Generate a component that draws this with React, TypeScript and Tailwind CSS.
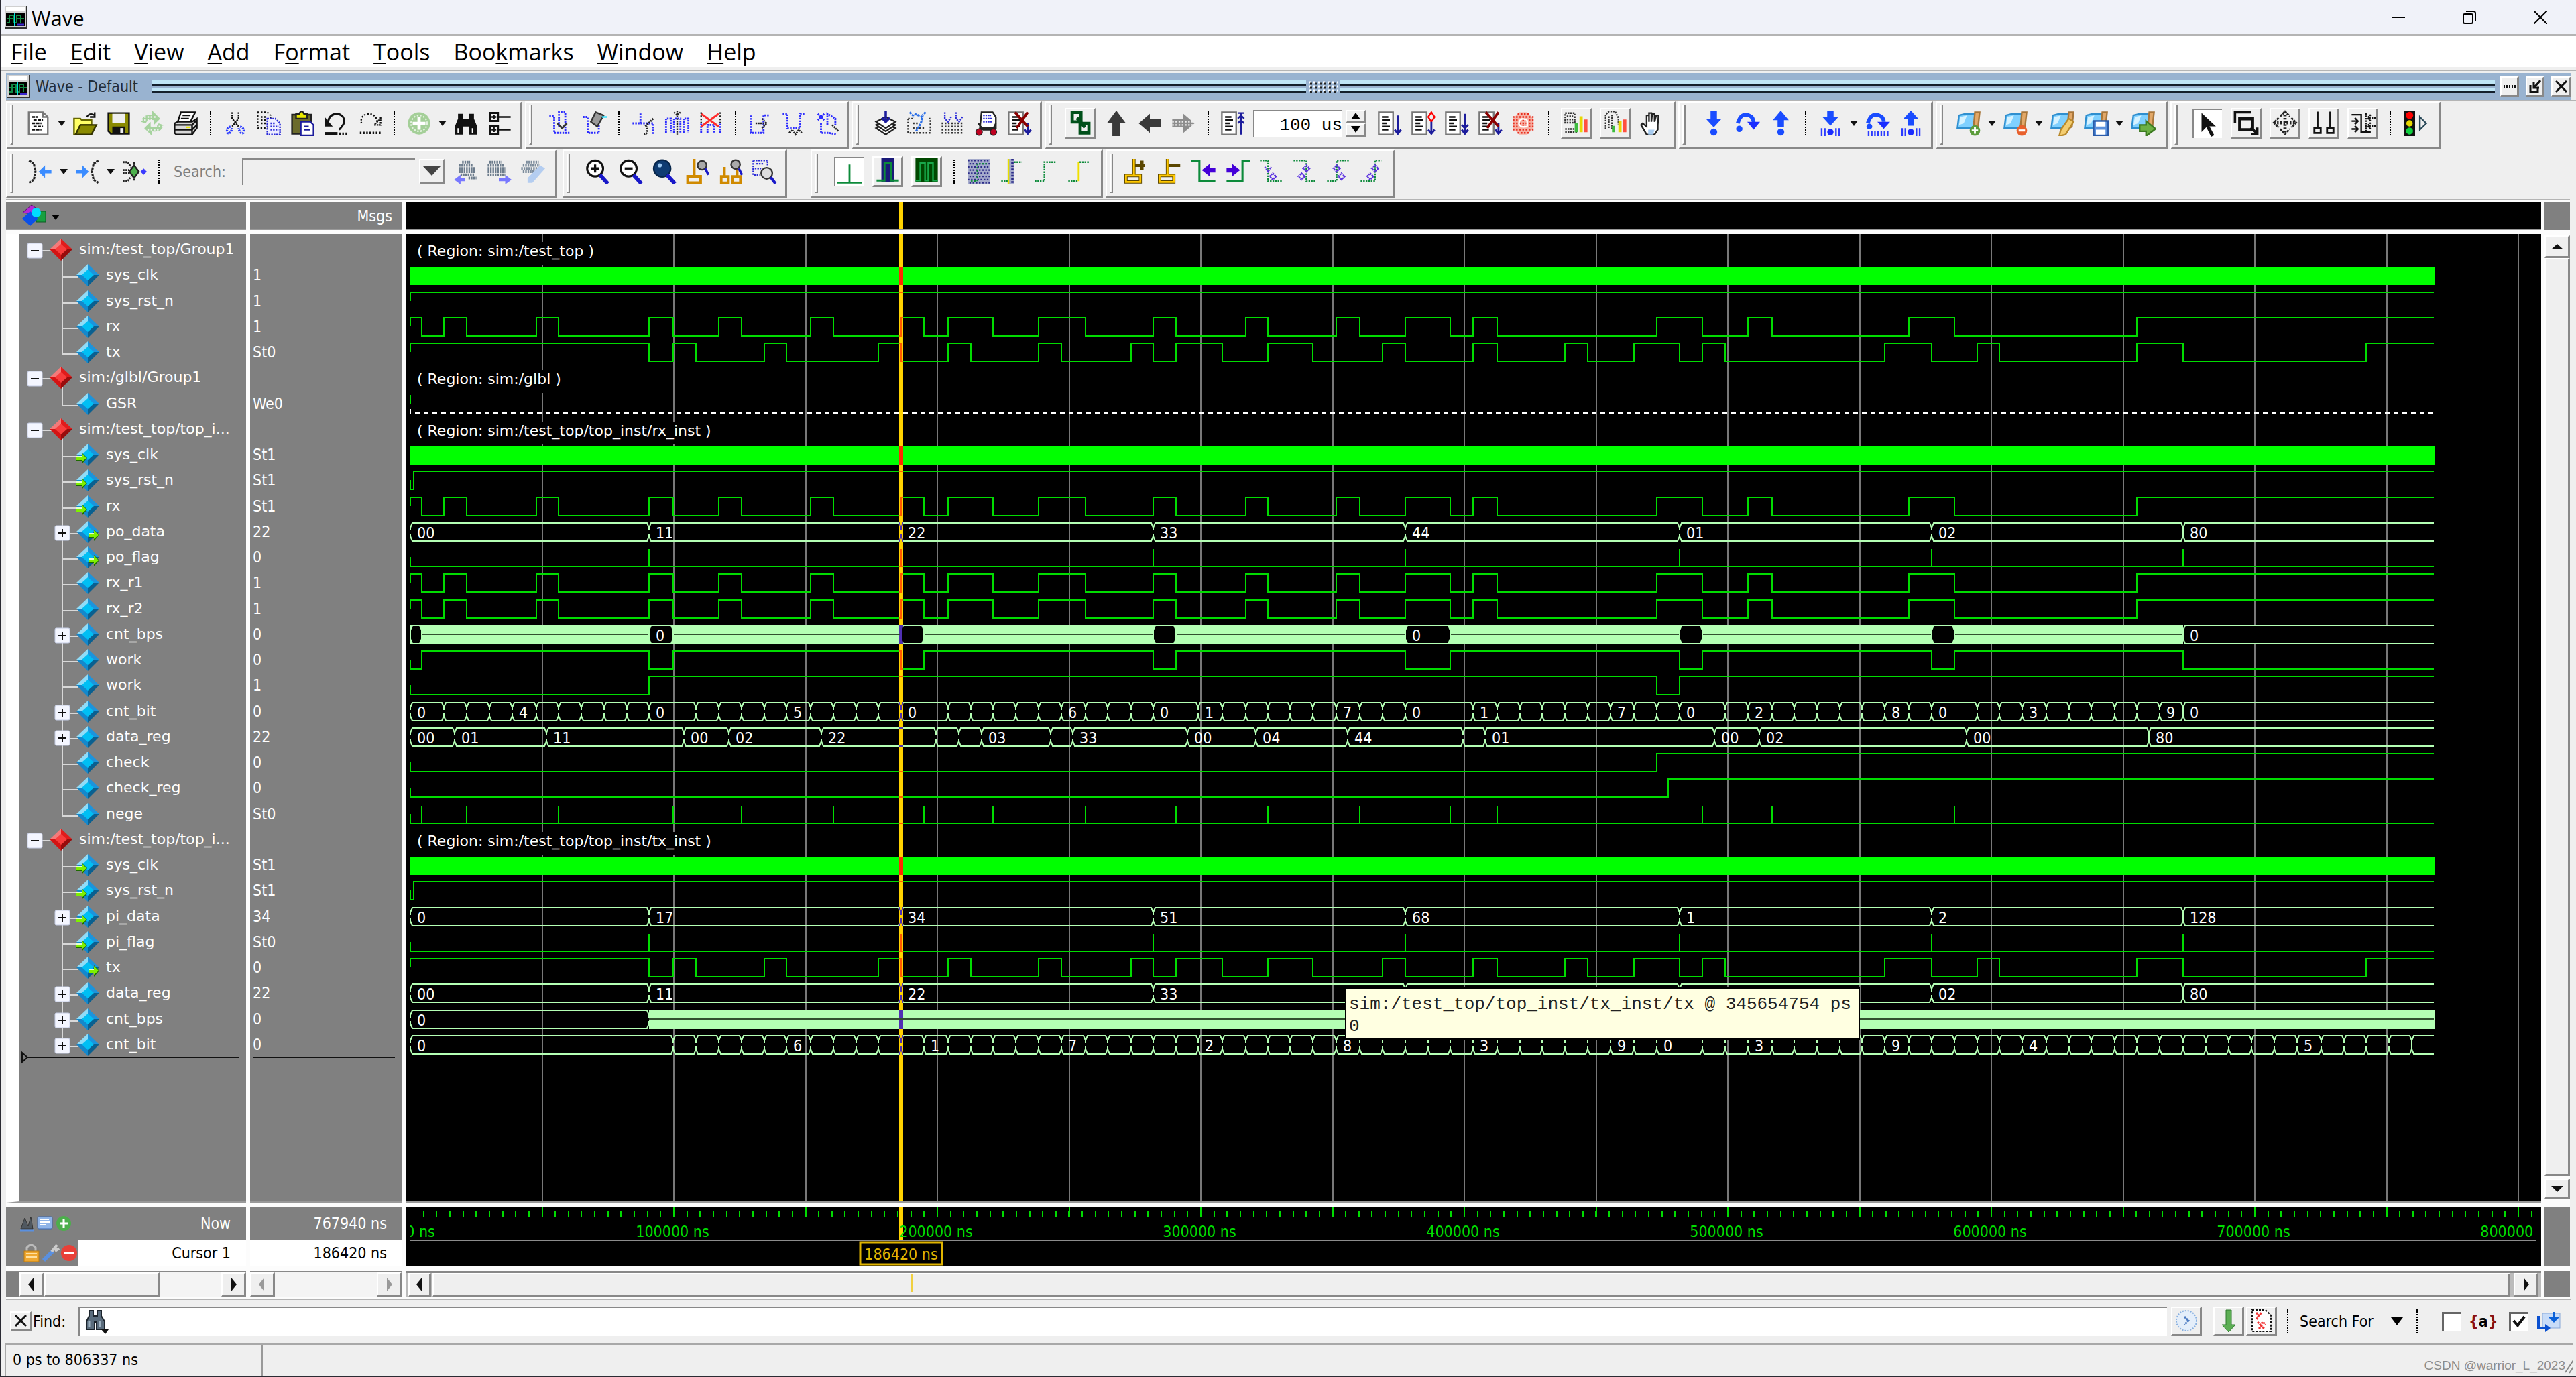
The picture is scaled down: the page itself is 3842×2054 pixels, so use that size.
import React from 'react';

type Kind = 'group' | 'wire' | 'in' | 'out';

interface Signal {
  name: string;
  value: string;
  kind: Kind;
  bus?: boolean;
  last?: boolean;
}

const signals: Signal[] = [
  { name: 'sim:/test_top/Group1', value: '', kind: 'group' },
  { name: 'sys_clk', value: '1', kind: 'wire' },
  { name: 'sys_rst_n', value: '1', kind: 'wire' },
  { name: 'rx', value: '1', kind: 'wire' },
  { name: 'tx', value: 'St0', kind: 'wire', last: true },
  { name: 'sim:/glbl/Group1', value: '', kind: 'group' },
  { name: 'GSR', value: 'We0', kind: 'wire', last: true },
  { name: 'sim:/test_top/top_i...', value: '', kind: 'group' },
  { name: 'sys_clk', value: 'St1', kind: 'in' },
  { name: 'sys_rst_n', value: 'St1', kind: 'in' },
  { name: 'rx', value: 'St1', kind: 'in' },
  { name: 'po_data', value: '22', kind: 'out', bus: true },
  { name: 'po_flag', value: '0', kind: 'out' },
  { name: 'rx_r1', value: '1', kind: 'wire' },
  { name: 'rx_r2', value: '1', kind: 'wire' },
  { name: 'cnt_bps', value: '0', kind: 'wire', bus: true },
  { name: 'work', value: '0', kind: 'wire' },
  { name: 'work', value: '1', kind: 'wire' },
  { name: 'cnt_bit', value: '0', kind: 'wire', bus: true },
  { name: 'data_reg', value: '22', kind: 'wire', bus: true },
  { name: 'check', value: '0', kind: 'wire' },
  { name: 'check_reg', value: '0', kind: 'wire' },
  { name: 'nege', value: 'St0', kind: 'wire', last: true },
  { name: 'sim:/test_top/top_i...', value: '', kind: 'group' },
  { name: 'sys_clk', value: 'St1', kind: 'in' },
  { name: 'sys_rst_n', value: 'St1', kind: 'in' },
  { name: 'pi_data', value: '34', kind: 'in', bus: true },
  { name: 'pi_flag', value: 'St0', kind: 'in' },
  { name: 'tx', value: '0', kind: 'out' },
  { name: 'data_reg', value: '22', kind: 'wire', bus: true },
  { name: 'cnt_bps', value: '0', kind: 'wire', bus: true },
  { name: 'cnt_bit', value: '0', kind: 'wire', bus: true, last: true },
];

/* ---------- toolbar icons, all on a 16 x 16 grid ---------- */

const line = (d: string, stroke = '#111', width = 1, dash?: string) => (
  <path d={d} fill="none" stroke={stroke} strokeWidth={width} strokeDasharray={dash} />
);
const fill = (d: string, color = '#111', stroke?: string) => (
  <path d={d} fill={color} stroke={stroke} strokeWidth={stroke ? 1 : 0} />
);

const docLines = (
  <>
    {fill('M1 1h9v14H1z', '#fff', '#777')}
    {line('M3 4h4M3 6h5M3 8h3M3 10h5M3 12h4', '#111', 1)}
  </>
);
const shapes = (
  <>
    {fill('M2 3l4-1h7l-1 8-3 1H1z', '#7fd0ff', '#2f8fcf')}
    {fill('M12 1l3 0-1 9-3 2z', '#e2a868', '#a8763a')}
    {fill('M3 4l4-1-2 5-3 1z', '#d6f2ff')}
  </>
);

const icons: Record<string, React.ReactNode> = {
  doc: (
    <>
      {fill('M2 1h9l3 3v11H2z', '#fff', '#777')}
      {line('M11 1v3h3', '#777')}
      {line('M4 4h4M5 6h6M4 8h6M5 10h6M4 12h6', '#111', 1, '2 .7')}
    </>
  ),
  open: (
    <>
      {fill('M1 5h4l1 1h6v3H5l-3 6H1z', '#ffff66', '#666600')}
      {fill('M5 9h10l-3 6H2z', '#8a8a00', '#333300')}
      {line('M9 4q2-3 5-1M14 1v3h-3', '#111')}
    </>
  ),
  save: (
    <>
      {fill('M1.500 1.500h13v13H3l-1.500-1.500z', '#8a8a00', '#111')}
      {fill('M4 2h8v6H4z', '#efefef')}
      {fill('M4 10h8v4.500H4z', '#111')}
      {fill('M9 11h2v3H9z', '#efefef')}
    </>
  ),
  refresh: (
    <>
      {fill('M1 7Q2 2 8 3V0l5 5-4 4V6Q5 5 4 8z', '#a6d39e')}
      {fill('M15 9q-1 5-7 4v3l-5-5 4-4v3q4 1 5-2z', '#a6d39e')}
      {line('M1 6h7M3 4h8M5 12h8M8 10h7', '#efefef', 1, '1 1')}
    </>
  ),
  print: (
    <>
      {fill('M5 1h9l-3 6H3z', '#fff', '#111')}
      {line('M6 3h5M5 5h5')}
      {fill('M1 8l2-1h9l3-2v6l-3 4H2l-1-1z', '#d8d8d8', '#111')}
      {line('M1 9h11l3-3M1 12h11l3-3M12 9v6')}
      {fill('M8 10h3v1H8z', '#e8e800')}
    </>
  ),
  cut: (
    <>
      {line('M6 1v4l4 5M10 1v4L6 10', '#111', 1, '1 .6')}
      {line('M5 10q-3 1-2 4 2 1 3-3M11 10q3 1 2 4-2 1-3-3', '#2b3bff', 1.400, '1 .6')}
    </>
  ),
  copy: (
    <>
      {line('M1 1h6l2 2v8H1zM3 4h3M3 6h4M3 8h4', '#111', 1, '1 1')}
      {fill('M7 5h5l3 3v7H7z', '#eef')}
      {line('M7 5h5l3 3v7H7zM9 8h3M9 10h5M9 12h5', '#2b2bd8', 1, '1 .6')}
    </>
  ),
  paste: (
    <>
      {fill('M1.500 2.500h12v12h-12z', '#6b6b2c', '#222')}
      {fill('M4 2h2l1-1.500h1L9 2h2v3H4z', '#e8e800', '#222')}
      {fill('M7 7h6l2 2v6.500H7z', '#fff', '#1c1c9c')}
      {line('M9 10h3M9 12h4', '#1c1c9c')}
    </>
  ),
  undo: (
    <>
      {line('M3 7q1-5 6-5 5 1 4 6-1 2-3 4', '#111', 1.200)}
      {fill('M1 4v6h5z')}
      {line('M1 14.500h8', '#111', 2)}
      {line('M10 14.500h5', '#111', 1.500, '1 1')}
    </>
  ),
  redo: (
    <>
      {line('M13 7Q12 2 7 2 2 3 3 8', '#111', 1, '1 1')}
      {line('M15 4v5h-4l4-4', '#111', 1, '1 .6')}
      {line('M2 14h13', '#111', 1.500, '1 1')}
    </>
  ),
  add: (
    <>
      <circle cx="8" cy="8" r="7" fill="#a4cf98" />
      <circle cx="8" cy="8" r="5" fill="none" stroke="#e3f1df" strokeDasharray="1 1" />
      {fill('M7 4h2v3h3v2H9v3H7V9H4V7h3z', '#fff')}
    </>
  ),
  find: (
    <>
      {fill('M3 2h3v3h4V2h3v3l2 5v5h-5v-5H6v5H1v-5l2-5z')}
      {line('M3 11v3M12 11v3', '#fff', 0.700)}
    </>
  ),
  tree: (
    <>
      {line('M2 1.500h5v5H2zM2 9.500h5v5H2z', '#111', 1.300)}
      {line('M3 4h3M4.500 2.500v3M3 12h3M4.500 10.500v3M7 4h8M7 12h8')}
    </>
  ),
  insPulse: (
    <>
      {line('M1 3.500h3v10.500h10M7 10V1h4v12', '#2b2bff', 1.200, '1 .7')}
      {line('M6 8l3 3 3-3', '#333', 1.200)}
    </>
  ),
  erase: (
    <>
      {line('M1 4h3v10h7V9', '#2b2bff', 1.200, '1 .7')}
      {fill('M9 1l5 2-4 7-4-3z', '#999', '#333')}
      {line('M13 4h3', '#2be0ff')}
    </>
  ),
  cutEdge: (
    <>
      {line('M1 8h5V1M6 8h8v7', '#2b2bff', 1.200, '1 .7')}
      {line('M14 5l-5 5M8 15q3 0 2-5', '#222', 1.200, '1 .5')}
    </>
  ),
  pasteEdge: (
    <>
      {line('M1 14V5h3v9M6 14V5h4v9M12 14V5h3v9', '#2b2bff', 1.200, '1 .6')}
      {line('M8 0v15M6 1l2 2 2-2', '#222', 1, '1 .6')}
    </>
  ),
  delEdge: (
    <>
      {line('M2 14V8M6 14V9h4v5M14 14V8', '#2b2bff', 1.200, '1 .6')}
      {line('M2 2l11 8M13 2L2 10', '#ff2b2b', 1.200)}
      {line('M2 1v7M14 1v7', '#222', 1, '1 1')}
    </>
  ),
  invert: (
    <>
      {line('M2 3v11h8V3h4', '#2b2bff', 1.200, '1 .7')}
      {line('M5 8h7M9 5l3 3-3 3', '#222', 1, '1 .5')}
    </>
  ),
  mirror: (
    <>
      {line('M1 2h3v9h8V2h3', '#2b2bff', 1.200, '1 .7')}
      {line('M5 14l2-2 2 3 2-3 2 2', '#222', 1, '1 .5')}
    </>
  ),
  valueEdge: (
    <>
      {line('M2 2l4 4M6 2L2 6M4 8v6h5l5 1M8 9V2l5 3v4', '#2b2bff', 1.200, '1 .6')}
      {line('M11 9l4 4', '#222', 1, '1 .5')}
    </>
  ),
  layers: (
    <>
      {fill('M2 11l6-3 6 3-6 4z', '#fff', '#222')}
      {fill('M2 9l6-3 6 3-6 4z', '#fff', '#222')}
      {fill('M2 7l6-3 6 3-6 4z', '#fff', '#222')}
      {line('M8 0v7M5.500 4.500L8 7l2.500-2.500', '#1c1c9c', 1.500)}
    </>
  ),
  editGrid: (
    <>
      {line('M1 5h3M1 5v9h14V5h-2M4 8h3M4 11h7', '#333', 1, '1 1')}
      {line('M2 1l3 3M12 1l-2 2M5 2l5 2-1 4-3 5', '#2b6fe8', 1.300, '1.500 .5')}
    </>
  ),
  downGrid: (
    <>
      {line('M1 8h14M1 10h14M1 12h14M1 14h14', '#333', 1, '1 1')}
      {line('M3 1v4l2 2 2-3M10 1v4l2 2 2-3', '#2b2bd8', 1, '1 .6')}
    </>
  ),
  cutDoc: (
    <>
      {fill('M5 1h7l2 3v7H4z', '#fff', '#222')}
      {line('M6 3h5M6 5h6M6 7h6', '#2b2bd8', 1, '1 .5')}
      {line('M3 8l3 4h6l2-4', '#222')}
      <circle cx="3.500" cy="13.500" r="2" fill="#c00020" stroke="#222" strokeWidth=".6" />
      <circle cx="12.500" cy="13.500" r="2" fill="#c00020" stroke="#222" strokeWidth=".6" />
    </>
  ),
  delDoc: (
    <>
      {docLines}
      {line('M13 8v6M11 12l2 2.500 2-2.500', '#1c1c9c', 1.200)}
      {line('M5 1l8 9M13 1L6 11', '#8b0000', 1.600)}
    </>
  ),
  link: (
    <>
      {line('M3 1.500h5.500v6H3z', '#00501a', 2)}
      {line('M8 8.500h5.500v6H8z', '#00501a', 2)}
      {line('M6 5l5 6', '#00501a', 2)}
    </>
  ),
  up: fill('M8 0l6 8h-3.500v8h-5V8H2z', '#3a3a3a'),
  left: fill('M1 8l7-6v3.500h7v5H8V14z', '#3a3a3a'),
  right: (
    <>
      {fill('M15 8L8 2v3.500H1v5h7V14z', '#8d8d8d')}
      {line('M1 7h13M1 9h13', '#eee', 1, '1 1')}
    </>
  ),
  restart: (
    <>
      {docLines}
      {line('M13 2v13M11 1.500h4M11 5l2-2 2 2M11 8l2-2 2 2', '#1c1c9c')}
    </>
  ),
  run: (
    <>
      {docLines}
      {line('M13 3v11M11 12l2 2.500 2-2.500', '#1c1c9c', 1.200)}
    </>
  ),
  cont: (
    <>
      {docLines}
      {line('M13 1l2 3-2 3-2-3z', '#f00')}
      {line('M13 7v7M11 12l2 2.500 2-2.500', '#1c1c9c', 1.200)}
    </>
  ),
  runAll: (
    <>
      {docLines}
      {line('M13 2v12M11 9l2 2 2-2M11 12l2 2.500 2-2.500', '#1c1c9c', 1.200)}
    </>
  ),
  stop: (
    <>
      {fill('M5 1h5l4 4v6l-4 4H5l-4-4V5z', '#f7b0a4')}
      {line('M4 2h8M1 4h14M1 6h14M1 8h14M1 10h14M1 12h14M4 14h8', '#e83020', 1, '1 1')}
      {line('M10 6q-4-2-5 1-1 4 5 3M10 6v4', '#fff')}
    </>
  ),
  profile: (
    <>
      {line('M1 2h6v6H1zM2 4h4M2 6h4M1 12h8M1 14h8', '#333', 1, '1 .6')}
      {fill('M7 8h2v6H7z', '#3dbb3d')}
      {fill('M10 4h2v10h-2z', '#e8d800')}
      {fill('M13 6h2v8h-2z', '#ff5040')}
    </>
  ),
  memory: (
    <>
      {line('M2 12V3l2-2h4l2 4v4M4 4v8M6 3v9', '#333', 1, '1 .6')}
      {fill('M10 7h2v7h-2z', '#e8d800')}
      {fill('M13 6h2v8h-2z', '#ff5040')}
      {fill('M6 10h2v4H6z', '#3dbb3d')}
    </>
  ),
  hand: (
    <>
      {fill('M5 15L1.500 9l1-1L5 10V3h1.500v4V1.500H8V7l.500-5H10v5l1-4h1.500l-.5 6v3l-2 3z', '#fff', '#222')}
      {fill('M6 12h4l-1 3H6z', '#a8ccf0')}
    </>
  ),
  stepIn: (
    <>
      {fill('M6 0h4v5h3l-5 5.500L3 5h3z', '#1a4cff')}
      <circle cx="8" cy="13.500" r="2.200" fill="#1a4cff" />
    </>
  ),
  stepOver: (
    <>
      {line('M2 8Q4 1 9 3q3 1 3 5', '#1a4cff', 2.400)}
      {fill('M8 7h8l-4 5z', '#1a2cff')}
      <circle cx="3" cy="11.500" r="2" fill="#1a4cff" />
    </>
  ),
  stepOut: (
    <>
      {fill('M6 10.500h4V6h3L8 0 3 6h3z', '#1a4cff')}
      <circle cx="8" cy="13.500" r="2.200" fill="#1a4cff" />
    </>
  ),
  stepInCur: (
    <>
      {fill('M6 0h4v4h3L8 9.500 3 4h3z', '#1a4cff')}
      {line('M2.500 11v5M4.500 11v5M11.500 11v5M13.500 11v5', '#2b3bff')}
      <circle cx="8" cy="13.500" r="2" fill="#1a2cff" />
    </>
  ),
  stepOverCur: (
    <>
      {line('M2 8Q4 1 9 3q3 1 3 4', '#1a4cff', 2.400)}
      {fill('M8 7h8l-4 4.500z', '#1a2cff')}
      <circle cx="3" cy="10" r="1.800" fill="#1a4cff" />
      {line('M2 14.500h14', '#2b3bff', 3, '1 1')}
    </>
  ),
  stepOutCur: (
    <>
      {fill('M6 9.500h4V5.500h3L8 0 3 5.500h3z', '#1a4cff')}
      {line('M2.500 11v5M4.500 11v5M11.500 11v5M13.500 11v5', '#2b3bff')}
      <circle cx="8" cy="13.500" r="2" fill="#1a2cff" />
    </>
  ),
  bookAdd: (
    <>
      {shapes}
      <circle cx="12" cy="12.500" r="3.300" fill="#5b9c3a" />
      {line('M12 10.500v4M10 12.500h4', '#fff', 1.200)}
    </>
  ),
  bookDel: (
    <>
      {shapes}
      <circle cx="12" cy="12.500" r="3.300" fill="#e8602c" />
      {line('M10 12.500h4', '#fff', 1.300)}
    </>
  ),
  bookEdit: (
    <>
      {shapes}
      {fill('M12 5l3 2-5 8-4 1 1-4z', '#f4cd70', '#b98a2c')}
    </>
  ),
  bookSave: (
    <>
      {shapes}
      {fill('M6.500 6.500h9v9h-9z', '#5a90dc', '#2a5aa8')}
      {fill('M8 7h6v3H8zM8 12h6v3H8z', '#fff')}
    </>
  ),
  bookGo: (
    <>
      {shapes}
      {fill('M6 9h4V6.500l6 5-6 4.500v-3H6z', '#6cb044', '#3c7a20')}
    </>
  ),
  select: fill('M4 1v12l3-3 3 6 2-1-3-5.500h4z'),
  zoomBox: (
    <>
      {line('M1 8V1.500h10', '#111', 1.500)}
      {line('M4 5.500h8v7H4z', '#111', 2)}
      {line('M11 11l4 4M15 11v4.500h-4', '#111', 1.500)}
    </>
  ),
  pan: (
    <>
      {line('M8 1v14M1 8h14', '#222', 2, '1 1')}
      {line('M5 4l3-3 3 3M5 12l3 3 3-3M4 5L1 8l3 3M12 5l3 3-3 3', '#222', 1.200, '1.500 .5')}
    </>
  ),
  twoCursor: line('M4 1v10M12 1v10M2 11.500h4v3H2zM10 11.500h4v3h-4z', '#111', 1.200),
  editMode: (
    <>
      {line('M1 3h6v11h6M1 7h4M1 12h4M3 5l2 2-2 2M3 10l2 2-2 2', '#111', 1)}
      {line('M10 2v12M12 5h4M12 10h4M13 3l-2 2 2 2M13 8l-2 2 2 2', '#111', 1, '1 .5')}
    </>
  ),
  traffic: (
    <>
      {fill('M1 0h7v16H1z')}
      <circle cx="4.500" cy="3" r="2.300" fill="#f00" />
      <circle cx="4.500" cy="8" r="2" fill="#e8d800" />
      <circle cx="4.500" cy="12.800" r="2.200" fill="#10d040" />
      {line('M11 4l4 4-4 4z', '#2a4a5a')}
    </>
  ),
  prevEdge: (
    <>
      {line('M1 1l3 2 1 5-1 5-3 2', '#222', 1.300, '1.500 .5')}
      {fill('M7 8l4-4v3h4v2h-4v3z', '#3b8cff')}
    </>
  ),
  nextEdge: (
    <>
      {line('M15 1l-3 2-1 5 1 5 3 2', '#222', 1.300, '1.500 .5')}
      {fill('M9 8L5 4v3H1v2h4v3z', '#3b8cff')}
    </>
  ),
  anyEdge: (
    <>
      {line('M1 2h3l2 3M1 14h3l2-3M1 7h4M1 9h4M8 2v3M8 11v3', '#222', 1.200, '1 .6')}
      {fill('M8 4l3 4-3 4-3-4z', '#4cb04c', '#222')}
      {fill('M12 8l2-2 2 2-2 2z', '#3b3bff')}
    </>
  ),
  findBack: (
    <>
      {line('M6 2h5M4 4h9M4 6h10M4 8h10M5 10h9M10 12h5', '#6c7c8c', 1.600, '1 .5')}
      {fill('M1 13l4-3v2h3v2H5v2z', '#7878ff')}
    </>
  ),
  findNext: (
    <>
      {line('M2 2h8M1 4h10M1 6h11M1 8h11M1 10h11', '#6c7c8c', 1.600, '1 .5')}
      {fill('M16 13l-4-3v2H8v2h4v2z', '#7878ff')}
    </>
  ),
  findOpt: (
    <>
      {line('M4 2h8M2 4h11M1 6h13M2 8h10', '#7c8c9c', 1.600, '1 .5')}
      {fill('M13 4l3 2-8 9-3 0V12z', '#b4cdf0')}
    </>
  ),
  zoomIn: (
    <>
      <circle cx="7" cy="6" r="5" fill="#fff" stroke="#111" strokeWidth="1.300" />
      {line('M4.500 6h5M7 3.500v5', '#111', 1.400)}
      {line('M10 10l5 5.500', '#1818c8', 2.400)}
    </>
  ),
  zoomOut: (
    <>
      <circle cx="7" cy="6" r="5" fill="#fff" stroke="#111" strokeWidth="1.300" />
      {line('M4.500 6h5', '#111', 1.400)}
      {line('M10 10l5 5.500', '#1818c8', 2.400)}
    </>
  ),
  zoomFull: (
    <>
      <circle cx="7" cy="6" r="5.300" fill="#0f3c72" stroke="#08264a" />
      <circle cx="5.500" cy="4" r="1.300" fill="#9cc8f0" />
      {line('M10 10l5 5.500', '#1818c8', 2.400)}
    </>
  ),
  zoomCur: (
    <>
      {line('M6 0v11M2 11h8v4H2z', '#d08a00', 1.800)}
      <circle cx="11" cy="4" r="2.800" fill="#aaa" stroke="#333" />
      {line('M13 6l2 4', '#1818c8', 1.500)}
    </>
  ),
  zoomTwo: (
    <>
      {line('M4 5v6M12 5v6M2 11h4.500v4H2zM9 11h5v4H9z', '#d08a00', 1.600)}
      <circle cx="11" cy="3.500" r="2.800" fill="#aaa" stroke="#333" />
      {line('M13 6l2 4', '#1818c8', 1.500)}
    </>
  ),
  zoomRange: (
    <>
      {line('M1 1h9v3M1 1v9h4M3 3h5M2 6h4', '#2b2bd8', 1, '1 .6')}
      <circle cx="9.500" cy="9" r="3.500" fill="#ddd" stroke="#333" />
      {line('M12 11.500l3 4', '#1818c8', 1.800)}
    </>
  ),
  expOff: line('M0 14.500h16M8 3v12', '#0c8a3a', 1.200),
  expDelta: (
    <>
      {fill('M4 0h8v15H4z', '#1a1a78')}
      {line('M1 14h5V3h4v11h5', '#0c8a3a', 1.200)}
    </>
  ),
  expEvent: (
    <>
      {fill('M1 0h14v15H1z', '#004800')}
      {line('M1 14h3V3h3v11h2V3h3v11h3', '#18a84a', 1)}
    </>
  ),
  expAll: (
    <>
      {fill('M1 0h14v16H1z', '#a4aacb')}
      {line('M1 1h14M1 5h14M1 9h14M1 13h14', '#2b2b88', 1, '1 1')}
      {line('M2 3h13M2 7h13M2 11h13M2 15h13', '#2b2b88', 1, '1 1')}
      {line('M3 14h4V3h7', '#0c8a3a', 1, '1 1')}
    </>
  ),
  expOne: (
    <>
      {fill('M5 0h4v16H5z', '#a4aacb')}
      {line('M5.500 0v16', '#e8e000', 1)}
      {line('M8 0v16', '#2b2b88', 1.500, '1 1')}
      {line('M1 14h4M9 2h5', '#0c8a3a', 1, '1 .6')}
    </>
  ),
  colAll: line('M1 14h6V2h7', '#0c8a3a', 1, '1 .6'),
  colOne: (
    <>
      {line('M1 14h6M8 2h6', '#0c8a3a', 1, '1 .6')}
      {line('M7.500 2v12', '#f0e000', 1.200)}
    </>
  ),
  curAdd: (
    <>
      {line('M6 0v10M1 10.500h9v4H1zM6 4h7M11 1v6', '#5a4600', 2)}
      {line('M6 0v10M1 10.500h9v4H1z', '#ffc800', 1.200)}
    </>
  ),
  curDel: (
    <>
      {line('M6 0v10M1 10.500h9v4H1zM6 4h8', '#5a4600', 2)}
      {line('M6 0v10M1 10.500h9v4H1z', '#ffc800', 1.200)}
    </>
  ),
  prevTrans: (
    <>
      {line('M0 1.500h5v12.500h10', '#0c8a3a', 1.300)}
      {fill('M6.500 7l5-4v2.500H15v3h-3.500V11z', '#4400d8')}
    </>
  ),
  nextTrans: (
    <>
      {line('M16 1.500h-5v12.500H1', '#0c8a3a', 1.300)}
      {fill('M9.500 7l-5-4v2.500H1v3h3.500V11z', '#4400d8')}
    </>
  ),
  fallPrev: (
    <>
      {line('M1 1h5v13h9', '#0c8a3a', 1, '1 .6')}
      {line('M4 5l2 3 2-3M9 9l2 2-2 2-2-2z', '#5a30e0', 1, '1 .4')}
    </>
  ),
  fallNext: (
    <>
      {line('M1 1h8v13h6', '#0c8a3a', 1, '1 .6')}
      {line('M9 4l2 2-2 2-2-2zM6 9l2 2-2 2-2-2z', '#5a30e0', 1, '1 .4')}
    </>
  ),
  risePrev: (
    <>
      {line('M1 14h6V1h8', '#0c8a3a', 1, '1 .6')}
      {line('M7 4l2 2-2 2-2-2zM10 9l2 2-2 2-2-2z', '#5a30e0', 1, '1 .4')}
    </>
  ),
  riseNext: (
    <>
      {line('M1 14h9V1h4', '#0c8a3a', 1, '1 .6')}
      {line('M10 4l2 2-2 2-2-2zM7 9l2 2-2 2-2-2z', '#5a30e0', 1, '1 .4')}
    </>
  ),
};

const Icon: React.FC<{ name: string }> = ({ name }) => (
  <svg viewBox="0 0 16 16" className="h-[38px] w-[38px]">
    {icons[name]}
  </svg>
);

/* "name" flat button, "name^" raised, "name!" pressed, "|" separator, "v" menu arrow */
const Tools: React.FC<{ items: string }> = ({ items }) => (
  <>
    {items.split(' ').map((item, i) => {
      if (item === '|') {
        return <div key={i} className="mx-[11px] h-[36px] border-l-2 border-dotted border-black" />;
      }
      if (item === 'v') {
        return (
          <button key={i} aria-label="More" className="flex w-5 justify-center">
            <svg viewBox="0 0 12 8" className="h-[8px] w-[12px]">
              <path d="M0 0h12l-6 8z" fill="#111" />
            </svg>
          </button>
        );
      }
      const name = item.replace(/[\^!]/, '');
      if (item.endsWith('^')) {
        return (
          <button
            key={i}
            aria-label={name}
            className="mx-[6px] flex h-[46px] w-[46px] items-center justify-center border-t-2 border-r-3 border-b-3 border-l-2 border-t-white border-r-[#888] border-b-[#888] border-l-white"
          >
            <Icon name={name} />
          </button>
        );
      }
      if (item.endsWith('!')) {
        return (
          <button
            key={i}
            aria-label={name}
            className="mx-[7px] flex h-[44px] w-[44px] items-center justify-center border-t-2 border-l-2 border-[#888] bg-white"
          >
            <Icon name={name} />
          </button>
        );
      }
      return (
        <button key={i} aria-label={name} className="flex w-[50px] items-center justify-center">
          <Icon name={name} />
        </button>
      );
    })}
  </>
);

const ToolGroup: React.FC<{ className: string; children: React.ReactNode }> = ({ className, children }) => (
  <div
    className={`relative flex h-[72px] shrink-0 items-center border-t-2 border-r-3 border-b-3 border-l-2 border-t-white border-r-[#888] border-b-[#888] border-l-white pb-[6px] ${className}`}
  >
    <div className="absolute top-1 bottom-1 left-[4px] w-[5px] border-r-2 border-b-2 border-l-2 border-r-[#888] border-b-[#888] border-l-white" />
    {children}
  </div>
);

/* ---------- tree of signal names ---------- */

const Box: React.FC<{ x: number; plus?: boolean }> = ({ x, plus }) => (
  <g>
    <rect x={x} y="10" width="22" height="22" rx="2" fill="#f4f6ff" stroke="#c4cce4" />
    <path d={`M${x + 5} 21h12`} stroke="#111" strokeWidth="2" />
    {plus && <path d={`M${x + 11} 15v12`} stroke="#111" strokeWidth="2" />}
  </g>
);

const Gem: React.FC<{ x: number; red?: boolean }> = ({ x, red }) => (
  <g transform={`translate(${x} 19)`}>
    <path d="M-17 0L0-16V0z" fill={red ? '#f47a7a' : '#8fdcf8'} />
    <path d="M17 0L0-16V0z" fill={red ? '#e01c1c' : '#1c94dc'} />
    <path d="M-17 0L0 17V0z" fill={red ? '#d41414' : '#1488cc'} />
    <path d="M17 0L0 17V0z" fill={red ? '#980c0c' : '#0a6090'} />
    <path d="M-9 0L0-8 9 0 0 8z" fill={red ? '#f83c3c' : '#00bff4'} />
  </g>
);

const Arrow: React.FC<{ x: number }> = ({ x }) => (
  <g>
    <path d={`M${x} 21h8v-5l8 8-8 9v-5h-8z`} fill="#1d6a00" />
    <path d={`M${x} 21h8v-4l7 7-7 6v-3h-8z`} fill="#7ff000" />
    <path d={`M${x} 21h8v2h-8z`} fill="#e6ffd0" />
  </g>
);

const NameRow: React.FC<{ signal: Signal }> = ({ signal }) => {
  const { name, kind, bus, last } = signal;
  if (kind === 'group') {
    return (
      <li className="flex items-center">
        <svg className="h-[38px] w-[89px] overflow-visible">
          <path d="M34 21h14M64 30v12" stroke="#d8d8d8" strokeWidth="2" />
          <Box x={12} />
          <Gem x={62} red />
        </svg>
        {name}
      </li>
    );
  }
  return (
    <li className="flex items-center">
      <svg className="h-[38px] w-[129px] overflow-visible">
        <path d={last ? 'M64-2v24h24' : 'M64-2v44M64 22h24'} fill="none" stroke="#d8d8d8" strokeWidth="2" />
        {bus && <Box x={53} plus />}
        <Gem x={102} />
        {kind === 'in' && <Arrow x={85} />}
        {kind === 'out' && <Arrow x={103} />}
      </svg>
      {name}
    </li>
  );
};

/* ---------- waveforms ---------- */

const START = 612;
const END = 3630;
const CURSOR = 1344;

const frame = [968, 1344, 1720, 2096, 2505, 2881, 3256];
const rx = [
  629, 662, 696, 800, 833, 968, 1004, 1072, 1106, 1209, 1243, 1344, 1378, 1414, 1481, 1549, 1619, 1720, 1754, 1858,
  1891, 1993, 2028, 2096, 2163, 2197, 2233, 2471, 2539, 2607, 2643, 2847, 2915, 3187,
];
const tx = [
  968, 1004, 1038, 1140, 1173, 1310, 1344, 1414, 1448, 1549, 1583, 1687, 1720, 1754, 1823, 1891, 1958, 2062, 2096,
  2197, 2233, 2334, 2368, 2437, 2505, 2539, 2573, 2811, 2881, 2949, 2982, 3187, 3256, 3529,
];
const idle = [
  [612, 629],
  [968, 1004],
  [1344, 1378],
  [1720, 1754],
  [2096, 2163],
  [2505, 2539],
  [2881, 2915],
];
const nege = [
  629, 696, 833, 1004, 1106, 1243, 1378, 1481, 1619, 1754, 1891, 2028, 2163, 2233, 2539, 2643, 2915,
];
const rxBits = [
  612, 662, 696, 730, 764, 800, 833, 867, 901, 935, 968, 1038, 1072, 1106, 1140, 1173, 1209, 1243, 1277, 1310, 1344,
  1414, 1448, 1481, 1515, 1549, 1583, 1619, 1652, 1687, 1720, 1787, 1823, 1858, 1891, 1924, 1958, 1993, 2028, 2062,
  2096, 2197, 2233, 2267, 2300, 2334, 2368, 2402, 2437, 2471, 2505, 2573, 2607, 2643, 2676, 2710, 2744, 2777, 2811,
  2847, 2881, 2949, 2982, 3016, 3052, 3086, 3119, 3154, 3187, 3221, 3256,
];
const txBits = [
  612, 1004, 1038, 1072, 1106, 1140, 1173, 1209, 1243, 1277, 1310, 1344, 1378, 1414, 1448, 1481, 1515, 1549, 1583,
  1619, 1652, 1687, 1720, 1754, 1787, 1823, 1858, 1891, 1924, 1958, 1993, 2028, 2062, 2096, 2130, 2163, 2197, 2233,
  2267, 2300, 2334, 2368, 2402, 2437, 2471, 2539, 2573, 2607, 2643, 2676, 2710, 2744, 2777, 2811, 2847, 2881, 2915,
  2949, 2982, 3016, 3052, 3086, 3119, 3154, 3187, 3221, 3256, 3290, 3324, 3358, 3392, 3426, 3462, 3496, 3529, 3563,
  3597,
];
const regEdges = [
  612, 678, 815, 1020, 1087, 1225, 1396, 1430, 1464, 1567, 1600, 1771, 1873, 2010, 2182, 2215, 2557, 2624, 2933, 3205,
];

type Labels = [number, string][];

const byFrame = (values: string[]): Labels => [START, ...frame].map((x, i) => [x, values[i]]);

const labels: Record<number, Labels> = {
  11: byFrame(['00', '11', '22', '33', '44', '01', '02', '80']),
  15: [[968, '0'], [2096, '0'], [3256, '0']],
  18: [
    [612, '0'], [764, '4'], [968, '0'], [1173, '5'], [1344, '0'], [1583, '6'], [1720, '0'], [1787, '1'], [1993, '7'],
    [2096, '0'], [2197, '1'], [2402, '7'], [2505, '0'], [2607, '2'], [2811, '8'], [2881, '0'], [3016, '3'],
    [3221, '9'], [3256, '0'],
  ],
  19: [
    [612, '00'], [678, '01'], [815, '11'], [1020, '00'], [1087, '02'], [1225, '22'], [1464, '03'], [1600, '33'],
    [1771, '00'], [1873, '04'], [2010, '44'], [2215, '01'], [2557, '00'], [2624, '02'], [2933, '00'], [3205, '80'],
  ],
  26: byFrame(['0', '17', '34', '51', '68', '1', '2', '128']),
  29: [[612, '00'], [968, '11'], [1344, '22'], [1720, '33'], [2881, '02'], [3256, '80']],
  30: [[612, '0']],
  31: [
    [612, '0'], [1173, '6'], [1378, '1'], [1583, '7'], [1787, '2'], [1993, '8'], [2197, '3'], [2402, '9'],
    [2471, '0'], [2607, '3'], [2811, '9'], [3016, '4'], [3426, '5'],
  ],
};

const mid = (row: number) => 372 + Math.round(row * 38.25);
const hi = (row: number) => mid(row) - 13;
const lo = (row: number) => mid(row) + 14;

const level = (row: number, high: boolean, edges: number[]) => {
  let up = high;
  let d = `M${START} ${mid(row)}V${up ? hi(row) : lo(row)}`;
  edges.forEach((x) => {
    up = !up;
    d += `H${x}V${up ? hi(row) : lo(row)}`;
  });
  return `${d}H${END}`;
};

const pulses = (row: number, xs: number[]) =>
  `${level(row, false, [])}${xs.map((x) => `M${x} ${hi(row) + 1}V${lo(row)}`).join('')}`;

const cell = (row: number, x1: number, x2: number) => {
  const top = hi(row);
  const bottom = lo(row);
  return `M${x1} ${mid(row) - 2}V${top + 7}L${x1 + 3} ${top}H${x2 - 3}L${x2} ${top + 7}V${mid(row) - 2}M${x2} ${mid(row) + 3}V${bottom - 7}L${x2 - 3} ${bottom}H${x1 + 3}L${x1} ${bottom - 7}V${mid(row) + 3}`;
};

const solidCell = (row: number, x1: number, x2: number) => {
  const top = hi(row);
  const bottom = lo(row);
  return `M${x1} ${top + 7}L${x1 + 3} ${top}H${x2 - 3}L${x2} ${top + 7}V${bottom - 7}L${x2 - 3} ${bottom}H${x1 + 3}L${x1} ${bottom - 7}z`;
};

const openCell = (row: number, x: number) =>
  `M${END} ${hi(row)}H${x + 3}L${x} ${hi(row) + 7}V${lo(row) - 7}L${x + 3} ${lo(row)}H${END}`;

const bus = (row: number, edges: number[]) =>
  edges.map((x, i) => (i + 1 < edges.length ? cell(row, x, edges[i + 1]) : openCell(row, x))).join('');

const wires = [
  level(2, true, []),
  level(3, true, rx),
  level(4, true, tx),
  `M${START} ${hi(6)}v13`,
  level(9, false, [617]),
  level(10, true, rx),
  pulses(12, frame),
  level(13, true, rx),
  level(14, true, rx),
  level(16, false, [...idle.flat().slice(1), 3256]),
  level(17, false, [968, 2471, 2505]),
  level(20, false, [2471]),
  level(21, false, [2488]),
  pulses(22, nege),
  level(25, false, [617]),
  pulses(27, frame),
  level(28, true, tx),
].join('');

const buses = [
  bus(11, [START, ...frame]),
  bus(18, rxBits),
  bus(19, regEdges),
  bus(26, [START, ...frame]),
  bus(29, [START, ...frame]),
  cell(30, START, 968),
  bus(31, txBits),
].join('');

interface TraceProps {
  green: string;
  clock: string;
  pale: string;
  dash: string;
}

const Traces: React.FC<TraceProps> = ({ green, clock, pale, dash }) => (
  <g fill="none" strokeWidth="2">
    {[1, 8, 24].map((row) => (
      <rect key={row} x={START} y={hi(row) + 1} width={END - START + 1} height="27" fill={clock} />
    ))}
    <path d={wires} stroke={green} />
    <path d={`M${START} ${lo(6) - 6}v6H${END}`} stroke={dash} strokeDasharray="7 6" />
    <path d={buses} stroke={pale} />
    <rect x={START} y={hi(15) - 1} width={3256 - START} height="29" fill={pale} />
    <rect x="968" y={hi(30) - 1} width={END - 967} height="29" fill={pale} />
    <path d={`M${START} ${mid(15)}H3256M968 ${mid(30)}H${END}`} stroke="#31502f" />
    {idle.map(([a, b]) => (
      <path key={a} d={solidCell(15, a, b)} fill="#000" stroke={pale} />
    ))}
    <path d={openCell(15, 3256)} fill="#000" stroke={pale} />
  </g>
);

const regions: [number, string, number][] = [
  [0, '( Region: sim:/test_top )', 290],
  [5, '( Region: sim:/glbl )', 240],
  [7, '( Region: sim:/test_top/top_inst/rx_inst )', 470],
  [23, '( Region: sim:/test_top/top_inst/tx_inst )', 470],
];

const majors = Array.from({ length: 16 }, (_, i) => 612 + Math.round((i + 1) * 196.5));

const Waves = () => (
  <svg className="absolute inset-0 h-full w-full">
    <defs>
      <clipPath id="cursor">
        <rect x={CURSOR - 3} y="0" width="6" height="2000" />
      </clipPath>
    </defs>
    <g transform="translate(-606 -349)">
      {majors.map((x) => (
        <path key={x} d={`M${x} 349V2000`} stroke="#787878" strokeWidth="2" />
      ))}
      {regions.map(([row, text, width]) => (
        <g key={row}>
          <rect x={START} y={mid(row) - 11} width={width} height="34" fill="#000" />
          <text x="622" y={mid(row) + 10} fill="#fff" className="font-['DejaVu_Sans',sans-serif] text-[22px]">
            {text}
          </text>
        </g>
      ))}
      <Traces green="#00dc00" clock="#00ff00" pale="#b4ffb4" dash="#ffffff" />
      <rect x={CURSOR - 3} y="349" width="6" height="1600" fill="#ffd200" />
      <g clipPath="url(#cursor)">
        <Traces green="#ff5a00" clock="#ff2a00" pale="#5030b4" dash="#3050ff" />
      </g>
      {Object.entries(labels).map(([row, items]) =>
        items.map(([x, text]) => (
          <text key={`${row}-${x}`} x={x + 10} y={mid(Number(row)) + 10} fill="#fff">
            {text}
          </text>
        )),
      )}
    </g>
  </svg>
);

const Ruler = () => (
  <svg className="absolute inset-0 h-full w-full">
    <defs>
      <clipPath id="ruler">
        <rect x="612" y="1800" width="3170" height="100" />
      </clipPath>
    </defs>
    <g transform="translate(-606 -1800)">
      {Array.from({ length: 161 }, (_, i) => 612 + Math.round((i + 1) * 19.65))
        .filter((x) => x < 3785)
        .map((x) => (
          <path key={x} d={`M${x} 1806v10`} stroke="#00dc00" strokeWidth="2" />
        ))}
      {majors.map((x) => (
        <path key={x} d={`M${x} 1800v16`} stroke="#00dc00" strokeWidth="2" />
      ))}
      <rect x={CURSOR - 3} y="1800" width="6" height="50" fill="#ffd200" />
      <g fill="#00dc00" textAnchor="middle" clipPath="url(#ruler)">
        <text x="627" y="1845">
          0 ns
        </text>
        {majors
          .filter((_, i) => i % 2 === 1)
          .map((x, i) => (
            <text key={x} x={x - 2} y="1845">
              {`${i + 1}00000 ns`}
            </text>
          ))}
      </g>
      <path d="M612 1850H3782" stroke="#8c8c8c" strokeWidth="2" />
      <rect x={CURSOR - 61} y="1853" width="122" height="33" fill="#000" stroke="#e0b400" strokeWidth="3" />
      <text x={CURSOR} y="1879" textAnchor="middle" fill="#e0b400">
        186420 ns
      </text>
    </g>
  </svg>
);

/* ---------- chrome ---------- */

const WaveLogo = () => (
  <svg viewBox="0 0 34 34" className="h-[34px] w-[34px] shrink-0">
    <rect width="34" height="34" fill="#333" />
    <rect width="32" height="32" fill="#d0d0d0" />
    <rect x="2" y="2" width="28" height="6" fill="#fff" />
    <rect x="2" y="11" width="28" height="19" fill="#000" />
    <path d="M3 25h4V14h6v11h5V14h6v11" fill="none" stroke="#118a44" strokeWidth="2" />
    <path d="M3 19h10M19 19h10" stroke="#118a44" strokeWidth="2" />
    <path d="M15 11v19" stroke="#00e0e0" strokeWidth="2" />
    <path d="M19 28h10" stroke="#3c28d0" strokeWidth="3" />
  </svg>
);

const menus: [string, string, string][] = [
  ['', 'F', 'ile'],
  ['', 'E', 'dit'],
  ['', 'V', 'iew'],
  ['', 'A', 'dd'],
  ['F', 'o', 'rmat'],
  ['', 'T', 'ools'],
  ['Boo', 'k', 'marks'],
  ['', 'W', 'indow'],
  ['', 'H', 'elp'],
];

const raised = 'border-t-2 border-r-3 border-b-3 border-l-2 border-t-white border-r-[#888] border-b-[#888] border-l-white bg-[#efefef]';

const ScrollButton: React.FC<{ dir: 'left' | 'right' | 'up' | 'down'; off?: boolean; className: string }> = ({
  dir,
  off,
  className,
}) => {
  const paths = {
    left: 'M12 0v20L4 10z',
    right: 'M6 0v20l8-10z',
    up: 'M0 14h18L9 6z',
    down: 'M0 6h18l-9 9z',
  };
  return (
    <button aria-label={`Scroll ${dir}`} className={`flex shrink-0 items-center justify-center ${raised} ${className}`}>
      <svg viewBox="0 0 18 20" className="h-[20px] w-[18px]">
        <path d={paths[dir]} fill={off ? '#999' : '#111'} />
      </svg>
    </button>
  );
};

const TitleLines = () => (
  <div className="flex flex-1 flex-col gap-[3px]">
    <div className="h-[8px] border-t-5 border-b-3 border-t-[#bfe6f6] border-b-[#14202c]" />
    <div className="h-[8px] border-t-5 border-b-3 border-t-[#bfe6f6] border-b-[#14202c]" />
  </div>
);

const App: React.FC = () => {
  return (
    <div className="flex min-h-screen flex-col overflow-hidden border-b-2 border-l-2 border-[#2b2b33] bg-[#efefef] font-['DejaVu_Sans_Condensed','DejaVu_Sans',sans-serif] text-[23px] leading-[28px] text-black">
      {/* Window title */}
      <header className="flex h-[53px] items-center border-b-2 border-[#b4b4b4] bg-[#f0f2f9] pl-[5px]">
        <WaveLogo />
        <h1 className="ml-[6px] flex-1 pt-[3px] font-['Open_Sans','Noto_Sans',sans-serif] text-[31px]">Wave</h1>
        <button aria-label="Minimize" className="flex w-[106px] justify-center">
          <svg viewBox="0 0 20 20" className="h-[20px] w-[20px]">
            <path d="M0 10h20" stroke="#000" strokeWidth="2" />
          </svg>
        </button>
        <button aria-label="Restore" className="flex w-[106px] justify-center">
          <svg viewBox="0 0 20 20" className="h-[20px] w-[20px]" fill="none" stroke="#000" strokeWidth="2">
            <rect x="1" y="5" width="14" height="14" rx="2" />
            <path d="M5 1h11q3 0 3 3v11" />
          </svg>
        </button>
        <button aria-label="Close" className="flex w-[106px] justify-center">
          <svg viewBox="0 0 20 20" className="h-[20px] w-[20px]">
            <path d="M0 0l20 20M20 0L0 20" stroke="#000" strokeWidth="2" />
          </svg>
        </button>
      </header>

      <nav className="flex h-[47px] items-center gap-[35px] bg-white pl-[14px] font-['Open_Sans','Noto_Sans',sans-serif] text-[34px] leading-[44px]">
        {menus.map(([before, key, after]) => (
          <button key={key + after}>
            {before}
            <span className="underline decoration-2 underline-offset-4">{key}</span>
            {after}
          </button>
        ))}
      </nav>

      {/* Dock title */}
      <div className="mt-[4px] border-t-2 border-[#b4b4b4]" />
      <div className="mx-[7px] mt-[3px] flex h-[40px] items-center bg-[#99b3d0] pl-[2px]">
        <WaveLogo />
        <span className="mr-[20px] ml-[8px] text-[#222c38]">Wave - Default</span>
        <TitleLines />
        <svg className="h-[20px] w-[50px]">
          <path d="M4 4h44M4 10h44M4 16h44" stroke="#fff" strokeWidth="3" strokeDasharray="3 4" />
          <path d="M6 6h42M6 12h42M6 18h42" stroke="#222" strokeWidth="3" strokeDasharray="3 4" />
        </svg>
        <TitleLines />
        <div className="ml-2 flex gap-[10px]">
          <button aria-label="Dock menu" className={`flex h-[30px] w-[28px] items-center justify-center ${raised}`}>
            <svg className="h-[6px] w-[18px]">
              <path d="M0 3h18" stroke="#111" strokeWidth="4" strokeDasharray="2 2" />
            </svg>
          </button>
          <button aria-label="Undock" className={`flex h-[30px] w-[28px] items-center justify-center ${raised}`}>
            <svg viewBox="0 0 18 20" className="h-[20px] w-[18px]" fill="none" stroke="#111" strokeWidth="3">
              <path d="M2 8v10h11v-5M17 1l-9 10M7 4v8h8" />
            </svg>
          </button>
          <button aria-label="Close pane" className={`flex h-[30px] w-[30px] items-center justify-center ${raised}`}>
            <svg viewBox="0 0 18 18" className="h-[18px] w-[18px]">
              <path d="M1 1l16 16M17 1L1 17" stroke="#111" strokeWidth="3" />
            </svg>
          </button>
        </div>
      </div>

      {/* Toolbars */}
      <div className="ml-[7px] flex gap-[4px] border-t-2 border-[#b4b4b4]">
        <ToolGroup className="w-[770px] pl-[21px]">
          <Tools items="doc v open save refresh print | cut copy paste undo redo | add v find tree" />
        </ToolGroup>
        <ToolGroup className="w-[483px] pl-[26px]">
          <Tools items="insPulse erase | cutEdge pasteEdge delEdge | invert mirror valueEdge" />
        </ToolGroup>
        <ToolGroup className="w-[284px] pl-[24px]">
          <Tools items="layers editGrid downGrid cutDoc delDoc" />
        </ToolGroup>
        <ToolGroup className="w-[941px] pl-[22px]">
          <Tools items="link^ up left right | restart" />
          <input
            aria-label="Run length"
            defaultValue="100 us"
            className="mx-[5px] h-[40px] w-[133px] border-t-2 border-l-2 border-[#888] bg-white pt-1 text-right font-['Liberation_Mono',monospace] text-[26px]"
          />
          <div className="mr-[11px] flex w-[30px] flex-col">
            <button aria-label="Increase" className={`flex h-[20px] items-center justify-center ${raised}`}>
              <svg viewBox="0 0 14 10" className="h-[10px] w-[14px]">
                <path d="M0 10h14L7 0z" />
              </svg>
            </button>
            <button aria-label="Decrease" className={`flex h-[20px] items-center justify-center ${raised}`}>
              <svg viewBox="0 0 14 10" className="h-[10px] w-[14px]">
                <path d="M0 0h14L7 10z" />
              </svg>
            </button>
          </div>
          <Tools items="run cont runAll delDoc stop | profile^ memory^ hand" />
        </ToolGroup>
        <ToolGroup className="w-[380px] pl-[26px]">
          <Tools items="stepIn stepOver stepOut | stepInCur v stepOverCur stepOutCur" />
        </ToolGroup>
        <ToolGroup className="w-[346px] pl-[22px]">
          <Tools items="bookAdd v bookDel v bookEdit bookSave v bookGo" />
        </ToolGroup>
        <ToolGroup className="w-[404px] pl-[24px]">
          <Tools items="select! zoomBox^ pan^ twoCursor^ editMode^ | traffic" />
        </ToolGroup>
      </div>
      <div className="ml-[7px] flex">
        <ToolGroup className="w-[822px] pl-[24px]">
          <Tools items="prevEdge v nextEdge v anyEdge |" />
          <label htmlFor="search" className="ml-[10px] text-[#808080]">
            Search:
          </label>
          <input
            id="search"
            className="ml-auto h-[40px] w-[258px] border-t-3 border-l-2 border-[#888] bg-[#efefef] px-2"
          />
          <button aria-label="Search history" className={`mr-[6px] ml-[6px] flex h-[38px] w-[38px] items-center justify-center ${raised}`}>
            <svg viewBox="0 0 26 14" className="h-[14px] w-[26px]">
              <path d="M0 0h26L13 14z" fill="#444" />
            </svg>
          </button>
          <Tools items="findBack findNext findOpt" />
          <div className="w-[9px]" />
        </ToolGroup>
        <ToolGroup className="ml-[8px] w-[335px] pl-[24px]">
          <Tools items="zoomIn zoomOut zoomFull zoomCur zoomTwo zoomRange" />
        </ToolGroup>
        <ToolGroup className="ml-[35px] w-[436px] pl-[26px]">
          <Tools items="expOff! expDelta^ expEvent^ | expAll expOne colAll colOne" />
        </ToolGroup>
        <ToolGroup className="ml-[4px] w-[432px] pl-[20px]">
          <Tools items="curAdd curDel prevTrans nextTrans fallPrev fallNext risePrev riseNext" />
        </ToolGroup>
      </div>

      {/* Wave window */}
      <main className="mt-[2px] mr-[9px] ml-[7px] flex flex-1 border-t-2 border-[#b4b4b4] bg-[#fcfcfc] pt-[2px]">
        <section className="flex w-[358px] shrink-0 flex-col text-white">
          <div className="flex h-[42px] items-center border-b-2 border-[#999] bg-[#808080] pl-[24px]">
            <button aria-label="Object filter" className="flex items-center gap-2">
              <svg viewBox="0 0 36 32" className="h-[32px] w-[36px]">
                <path d="M1 12L14 1l9 6-10 7z" fill="#b428d8" stroke="#5a0a70" />
                <path d="M21 10h14v16H21z" fill="#18a040" stroke="#0a5a20" />
                <path d="M0 21l12-11 12 11-12 11z" fill="#0a50e8" />
                <circle cx="21" cy="12" r="7" fill="#00dcff" />
              </svg>
              <svg viewBox="0 0 12 8" className="mt-[6px] h-[8px] w-[12px]">
                <path d="M0 0h12l-6 8z" />
              </svg>
            </button>
          </div>
          <div className="mt-[6px] flex flex-1 flex-col border-b-2 border-l-20 border-b-[#999] border-l-white bg-[#808080] pt-[4px]">
            <ul className="grid h-[1224px] auto-rows-fr font-['DejaVu_Sans',sans-serif] text-[22px]">
              {signals.map((signal, i) => (
                <NameRow key={i} signal={signal} />
              ))}
            </ul>
            <svg className="h-[16px] w-[330px] overflow-visible">
              <path d="M4-7v14l8-7zM12 0h316" fill="none" stroke="#111" strokeWidth="2" />
            </svg>
          </div>
          <div className="mt-[6px] flex h-[49px] shrink-0 items-center bg-[#808080] pr-[23px] pl-[20px]">
            <svg viewBox="0 0 80 24" className="h-[24px] w-[80px]">
              <path d="M2 20L8 4l5 12 4-14 3 18z" fill="#505860" stroke="#333" />
              <path d="M1 22h20" stroke="#5a90e0" strokeWidth="3" />
              <rect x="27" y="2" width="22" height="18" rx="2" fill="#8fb4e8" stroke="#3c68b0" />
              <path d="M30 6h14M30 10h16M30 14h10" stroke="#fff" strokeWidth="2" />
              <circle cx="66" cy="12" r="11" fill="#4cae4c" />
              <path d="M66 6v12M60 12h12" stroke="#fff" strokeWidth="3" />
            </svg>
            <span className="ml-auto">Now</span>
          </div>
          <div className="flex h-[39px] shrink-0 items-stretch bg-[#808080] pl-[26px]">
            <svg viewBox="0 0 82 32" className="my-auto h-[32px] w-[82px] shrink-0">
              <path d="M5 14V8q6-8 13 0v6" fill="none" stroke="#bbb" strokeWidth="3" />
              <rect x="1" y="13" width="22" height="16" fill="#f0a830" stroke="#b87810" />
              <path d="M4 17h16M4 22h16" stroke="#ffe0a0" strokeWidth="2" />
              <path d="M30 27l14-14" stroke="#5a90e0" strokeWidth="6" />
              <path d="M42 14l8-10M47 13l6-4" stroke="#ccc" strokeWidth="4" />
              <circle cx="68" cy="16" r="12" fill="#e84038" />
              <path d="M61 16h14" stroke="#fff" strokeWidth="4" />
            </svg>
            <span className="flex flex-1 items-center justify-end bg-white pr-[23px] text-black">Cursor 1</span>
          </div>
          <div className="mt-[8px] mb-[3px] flex h-[38px] shrink-0 border-t-2 border-[#888] bg-[#808080] pl-[20px]">
            <ScrollButton dir="left" className="w-[37px]" />
            <div className={`w-[172px] ${raised}`} />
            <div className="flex-1 bg-[#f4f4f4]" />
            <ScrollButton dir="right" className="w-[37px]" />
          </div>
        </section>

        <section className="ml-[6px] flex w-[226px] shrink-0 flex-col text-white">
          <div className="flex h-[42px] items-center justify-end border-b-2 border-[#999] bg-[#808080] pt-[2px] pr-[14px]">Msgs</div>
          <div className="mt-[6px] flex flex-1 flex-col border-b-2 border-[#999] bg-[#808080] pt-[4px] pl-[4px]">
            <ul className="grid h-[1224px] auto-rows-fr">
              {signals.map((signal, i) => (
                <li key={i} className="flex items-center">
                  {signal.value}
                </li>
              ))}
            </ul>
            <svg className="h-[16px] w-[212px] overflow-visible">
              <path d="M0 0h212" stroke="#111" strokeWidth="2" />
            </svg>
          </div>
          <div className="mt-[6px] flex h-[49px] shrink-0 items-center justify-end bg-[#808080] pr-[22px]">767940 ns</div>
          <div className="flex h-[39px] shrink-0 items-center justify-end bg-white pr-[22px] text-black">186420 ns</div>
          <div className="mt-[8px] mb-[3px] flex h-[38px] shrink-0 border-t-2 border-[#888]">
            <ScrollButton dir="left" off className="w-[37px]" />
            <div className="flex-1 bg-[#f4f4f4]" />
            <ScrollButton dir="right" off className="w-[37px]" />
          </div>
        </section>

        <section className="ml-[7px] flex min-w-0 flex-1 flex-col">
          <div className="h-[42px] border-b-2 border-[#999] bg-black">
            <svg className="h-full w-full">
              <rect x="735" width="6" height="60" fill="#ffd200" />
            </svg>
          </div>
          <div className="relative mt-[6px] flex-1 overflow-hidden border-b-2 border-[#999] bg-black">
            <Waves />
            <div
              role="tooltip"
              className="absolute top-[1124px] left-[1400px] h-[78px] w-[768px] border-2 border-black bg-[#ffffe1] pt-[7px] pl-[4px] font-['Liberation_Mono',monospace] text-[26px] leading-[33px] whitespace-nowrap text-[#222]"
            >
              sim:/test_top/top_inst/tx_inst/tx @ 345654754 ps
              <br />0
            </div>
          </div>
          <div className="relative mt-[6px] h-[88px] shrink-0 overflow-hidden bg-black">
            <Ruler />
          </div>
          <div className="mt-[8px] mb-[3px] flex h-[38px] shrink-0 border-t-3 border-[#888] bg-[#bbb] pr-[5px] pl-[3px]">
            <ScrollButton dir="left" className="w-[34px]" />
            <div className={`relative ml-[2px] flex-1 ${raised}`}>
              <div className="absolute top-0 bottom-1 left-[712px] w-[2px] bg-[#f0d040]" />
            </div>
            <ScrollButton dir="right" className="ml-[5px] w-[36px]" />
          </div>
        </section>

        <section className="ml-[5px] flex w-[38px] shrink-0 flex-col">
          <div className="h-[42px] bg-[#808080]" />
          <div className="mt-[6px] flex flex-1 flex-col pt-[2px]">
            <ScrollButton dir="up" className="h-[34px]" />
            <div className={`flex-1 ${raised}`} />
            <ScrollButton dir="down" className="mt-[4px] mb-[6px] h-[30px]" />
          </div>
          <div className="mt-[6px] h-[88px] bg-[#808080]" />
          <div className="mt-[8px] mb-[3px] h-[38px] bg-[#808080]" />
        </section>
      </main>

      {/* Find bar */}
      <form className="mx-[7px] flex h-[67px] items-center border-t-2 border-[#b4b4b4] pb-[2px] pl-[6px]">
        <button type="button" aria-label="Close find" className={`flex h-[30px] w-[32px] items-center justify-center ${raised}`}>
          <svg viewBox="0 0 18 18" className="h-[18px] w-[18px]">
            <path d="M1 1l16 16M17 1L1 17" stroke="#111" strokeWidth="3" />
          </svg>
        </button>
        <label htmlFor="find" className="ml-[2px] w-[68px]">
          Find:
        </label>
        <div className="flex h-[44px] flex-1 items-center border-t-2 border-l-2 border-[#888] bg-white pl-2">
          <svg viewBox="0 0 38 38" className="h-[38px] w-[38px]">
            <path d="M6 2h6v8h6V2h6v8l5 8v12H17V19h-3v11H2V18l4-8z" fill="#5a6c7c" stroke="#1c242c" strokeWidth="2" />
            <path d="M6 18v9M22 18v9" stroke="#9cb0c0" strokeWidth="3" />
            <path d="M24 30h11l-5 7z" fill="#111" />
          </svg>
          <input id="find" className="h-full flex-1 px-2 outline-none" />
        </div>
        <button type="button" aria-label="Find" className={`ml-[6px] flex h-[44px] w-[46px] items-center justify-center ${raised}`}>
          <svg viewBox="0 0 36 36" className="h-[36px] w-[36px]" fill="none">
            <circle cx="18" cy="18" r="15" fill="#e4eefa" stroke="#88b0e0" strokeWidth="2" strokeDasharray="2 2" />
            <path d="M15 12l6 6-6 6" stroke="#4878c0" strokeWidth="3" strokeDasharray="3 1" />
          </svg>
        </button>
        <button type="button" aria-label="Find direction" className={`ml-[17px] flex h-[44px] w-[46px] items-center justify-center ${raised}`}>
          <svg viewBox="0 0 36 36" className="h-[36px] w-[36px]">
            <path d="M14 2h8v22h6L18 35 8 24h6z" fill="#5cae54" stroke="#2c7a2c" />
          </svg>
        </button>
        <button type="button" aria-label="Find options" className={`ml-[3px] flex h-[44px] w-[46px] items-center justify-center ${raised}`}>
          <svg viewBox="0 0 36 36" className="h-[36px] w-[36px]" fill="none">
            <path d="M4 2h20l8 8v24H4z" fill="#fff" stroke="#111" strokeWidth="2" strokeDasharray="3 2" />
            <path d="M10 6l4 4 4-4M14 10l-4 7M12 20l4 4 4-4 4 4M14 30l4-4 4 4" stroke="#f03030" strokeWidth="3" strokeDasharray="3 1" />
          </svg>
        </button>
        <div className="ml-[15px] h-[36px] border-l-2 border-dotted border-black" />
        <button type="button" className="ml-[17px] flex w-[154px] items-center justify-between">
          Search For
          <svg viewBox="0 0 18 12" className="h-[12px] w-[18px]">
            <path d="M0 0h18L9 12z" />
          </svg>
        </button>
        <div className="ml-[20px] h-[36px] border-l-2 border-dotted border-black" />
        <input
          type="checkbox"
          id="regex"
          className="ml-[36px] h-[28px] w-[28px] appearance-none border-t-3 border-l-3 border-[#666] bg-white"
        />
        <label htmlFor="regex" className="ml-[12px] w-[38px] font-bold text-[#8b1010]">
          {'{'}
          <span className="text-black">a</span>
          {'}'}
        </label>
        <span className="relative ml-[22px] flex">
          <input
            type="checkbox"
            id="wrap"
            defaultChecked
            className="h-[28px] w-[28px] appearance-none border-t-3 border-l-3 border-[#666] bg-white"
          />
          <svg viewBox="0 0 28 28" className="pointer-events-none absolute inset-0 h-[28px] w-[28px]">
            <path d="M7 13l6 7 10-13" fill="none" stroke="#111" strokeWidth="4" />
          </svg>
        </span>
        <label htmlFor="wrap" aria-label="Wrap search" className="mr-[15px] ml-[14px]">
          <svg viewBox="0 0 36 32" className="h-[32px] w-[36px]" fill="none">
            <rect x="8" y="4" width="26" height="22" fill="#c8dcf8" stroke="#88a8d8" />
            <path d="M2 8v18h12" stroke="#0a50d0" strokeWidth="4" />
            <path d="M12 20v12l8-6z" fill="#0a50d0" />
            <path d="M25 2v12" stroke="#0a60d8" strokeWidth="4" />
            <path d="M17 10h16l-8 8z" fill="#0a60d8" />
          </svg>
        </label>
      </form>

      <footer className="mr-[4px] ml-[5px] flex h-[48px] border-t-3 border-l-2 border-[#a8a8a8]">
        <div className="flex w-[383px] items-center border-r-2 border-[#999] pb-[4px] pl-[10px]">0 ps to 806337 ns</div>
        <div className="flex flex-1 items-end justify-end pb-[3px] font-['Liberation_Sans',sans-serif] text-[19px] leading-[24px] text-[#8c8c8c]">
          CSDN @warrior_L_2023
          <svg className="h-[24px] w-[12px]">
            <path d="M0 22L12 4M6 23l6-9" stroke="#888" strokeWidth="2" />
          </svg>
        </div>
      </footer>
    </div>
  );
};

export default App;
